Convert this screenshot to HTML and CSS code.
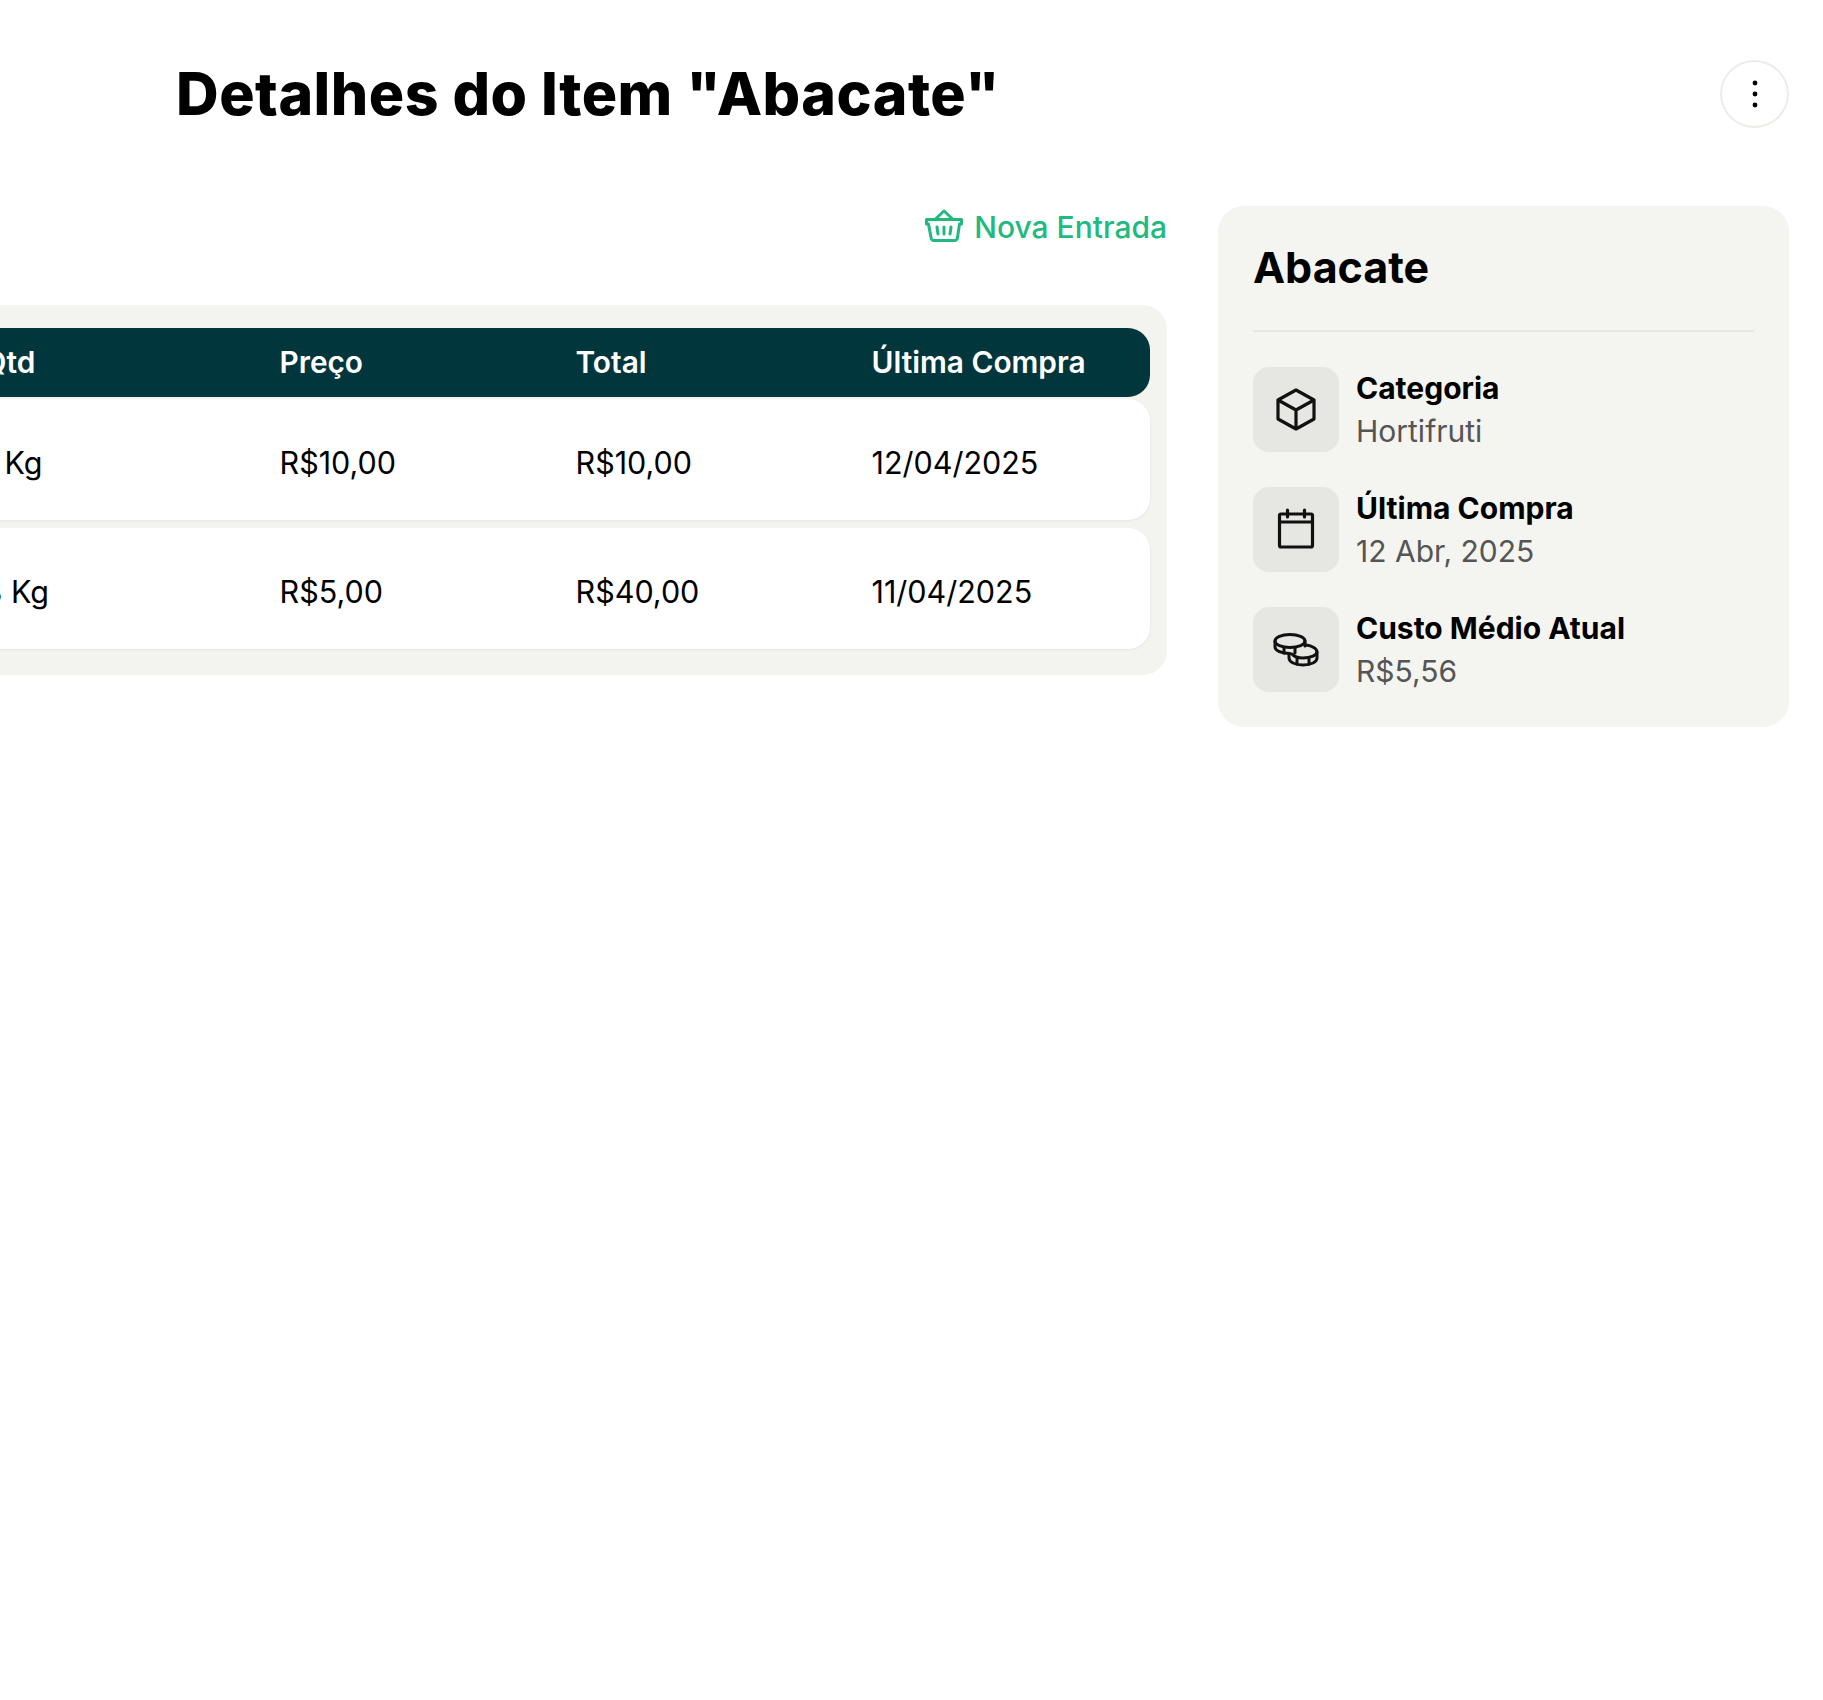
FILE: index.html
```html
<!DOCTYPE html>
<html lang="pt-BR">
<head>
  <meta charset="UTF-8">
  <meta name="viewport" content="width=device-width, initial-scale=1">
  <title>Detalhes do Item</title>
  <link rel="stylesheet" href="styles.css">
</head>

<body>

  <header class="topo">
    <h1>Detalhes do Item "Abacate"</h1>
    <button class="botao-menu" aria-label="Menu">
      <svg width="24" height="28" viewBox="0 0 24 28" fill="#000">
        <circle cx="12" cy="3" r="2.4"></circle>
        <circle cx="12" cy="14" r="2.4"></circle>
        <circle cx="12" cy="25" r="2.4"></circle>
      </svg>
    </button>
  </header>

  <div class="conteudo">
    <main class="principal">
      <div class="acoes">
        <a class="nova-entrada" href="#">
          <svg width="38" height="33" viewBox="0 0 38 33" fill="none" stroke="currentColor" stroke-width="3" stroke-linecap="round" stroke-linejoin="round">
            <path d="M1.500 10.500h35V15h-2l-2 13.500a3 3 0 0 1-3 3H9a3 3 0 0 1-3-3L3.500 15h-2z"></path>
            <path d="M10 10.500L19 2l9 8.500"></path>
            <path d="M12 18l1 7M19 18v7M26 18l-1 7"></path>
          </svg>
          Nova Entrada
        </a>
      </div>

      <div class="painel">
        <div class="linha cabecalho">
          <span>Qtd</span>
          <span>Preço</span>
          <span>Total</span>
          <span>Última Compra</span>
        </div>
        <div class="linha">
          <span>1 Kg</span>
          <span>R$10,00</span>
          <span>R$10,00</span>
          <span>12/04/2025</span>
        </div>
        <div class="linha">
          <span>8 Kg</span>
          <span>R$5,00</span>
          <span>R$40,00</span>
          <span>11/04/2025</span>
        </div>
      </div>
    </main>

    <aside class="resumo">
      <h2>Abacate</h2>
      <div class="info">
        <div class="icone">
          <svg width="44" height="44" viewBox="0 1 44 44" fill="none" stroke="#111" stroke-width="3.2" stroke-linejoin="round">
            <path d="M22 3l18 10v19L22 42 4 32V13z"></path>
            <path d="M4 13l18 10 18-10M22 23v19"></path>
          </svg>
        </div>
        <div class="info-texto">
          <strong>Categoria</strong>
          <span>Hortifruti</span>
        </div>
      </div>
      <div class="info">
        <div class="icone">
          <svg width="44" height="44" viewBox="0 0 44 44" fill="none" stroke="#111" stroke-width="3.2" stroke-linecap="round" stroke-linejoin="round">
            <rect x="5.500" y="6" width="33" height="33" rx="1.5"></rect>
            <path d="M5.500 14h33M13.500 2v7M30.500 2v7"></path>
          </svg>
        </div>
        <div class="info-texto">
          <strong>Última Compra</strong>
          <span>12 Abr, 2025</span>
        </div>
      </div>
      <div class="info">
        <div class="icone">
          <svg width="46" height="36" viewBox="0 0 46 36" fill="none" stroke="#111" stroke-width="3" stroke-linecap="round" stroke-linejoin="round">
            <ellipse cx="17" cy="9" rx="15" ry="6.5"></ellipse>
            <path d="M2 9v6c0 3.600 6.700 6.500 15 6.500M32 9v5"></path>
            <path d="M33 13c6 .8 11 3.500 11 7v6c0 4-6 7-14 7s-14-3-14-7v-4"></path>
            <path d="M19 22c2 2.500 6 4 11 4 8 0 14-3 14-6"></path>
            <path d="M11 16v5M22 16v5M24 27v5M36 27v5"></path>
          </svg>
        </div>
        <div class="info-texto">
          <strong>Custo Médio Atual</strong>
          <span>R$5,56</span>
        </div>
      </div>
    </aside>
  </div>

</body>
</html>
```

FILE: styles.css
```css
body {
  margin: 0;
  font-family: 'Inter', sans-serif;
  background: #fff;
  color: #000;
  overflow: hidden;
}

.topo {
  display: flex;
  justify-content: space-between;
  align-items: center;
  padding: 60px 34px 0 176px;
}

h1 {
  margin: 0;
  font-size: 59px;
  line-height: 68px;
  font-weight: 800;
  letter-spacing: 0.5px;
}

.botao-menu {
  width: 69px;
  height: 68px;
  display: flex;
  align-items: center;
  justify-content: center;
  padding: 0;
  background: #fff;
  border: 2px solid #ecece8;
  border-radius: 50%;
}

.conteudo {
  display: flex;
  align-items: flex-start;
  gap: 51px;
  margin-top: 78px;
  padding-right: 34px;
}

.principal {
  flex: 1;
  margin-left: -200px;
}

.acoes {
  display: flex;
  justify-content: flex-end;
  height: 96px;
  padding-top: 3px;
}

.nova-entrada {
  display: flex;
  align-items: flex-start;
  gap: 11px;
  color: #22b97f;
  font-size: 30px;
  font-weight: 500;
  line-height: 36px;
  text-decoration: none;
}

.painel {
  background: #f3f3ef;
  border-radius: 24px;
  padding: 23px 17px 26px 17px;
}

.linha {
  box-sizing: border-box;
  display: grid;
  grid-template-columns: 296px 296px 296px 1fr;
  align-items: center;
  height: 121px;
  padding: 6px 0 0 166.500px;
  margin-bottom: 8px;
  background: #fff;
  border-radius: 22px;
  font-size: 30.500px;
  box-shadow: 0 1px 3px rgba(0, 0, 0, 0.06);
}

.linha:last-child {
  margin-bottom: 0;
}

.linha.cabecalho {
  height: 69px;
  padding: 0 0 2px 166.500px;
  margin-bottom: 2px;
  background: #02363d;
  color: #fff;
  font-size: 29.800px;
  font-weight: 600;
  box-shadow: none;
}

.resumo {
  box-sizing: border-box;
  width: 571px;
  padding: 35px;
  background: #f4f4f0;
  border-radius: 26px;
}

h2 {
  margin: 0 0 35px 0;
  padding-bottom: 37px;
  border-bottom: 2px solid #e6e7e3;
  font-size: 43px;
  line-height: 52px;
  font-weight: 700;
}

.info {
  display: flex;
  align-items: center;
  gap: 17px;
  margin-top: 35px;
}

.icone {
  flex: none;
  width: 86px;
  height: 85px;
  display: flex;
  align-items: center;
  justify-content: center;
  background: #e6e7e3;
  border-radius: 16px;
}

.info-texto {
  display: flex;
  flex-direction: column;
  gap: 6px;
  font-size: 30px;
  line-height: 37px;
}

.info-texto strong {
  font-weight: 700;
}

.info-texto span {
  color: #555;
}
```
